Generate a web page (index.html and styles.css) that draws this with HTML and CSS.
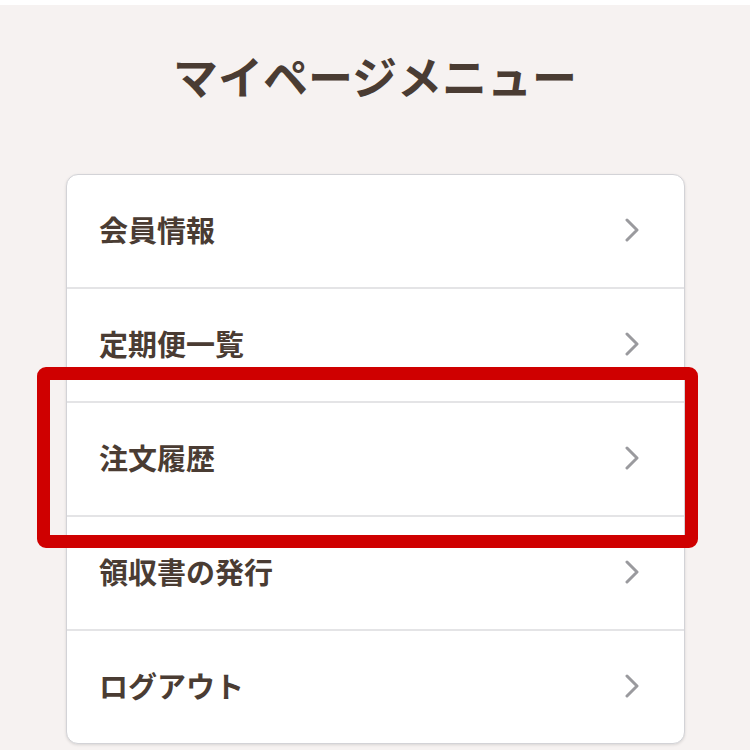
FILE: index.html
```html
<!DOCTYPE html>
<html lang="ja">
<head>
<meta charset="utf-8">
<title>マイページメニュー</title>
<link rel="stylesheet" href="styles.css">
</head>
<body>
<div class="topbar"></div>
<main class="page">
  <h1 class="title">マイページメニュー</h1>
  <div class="card">
    <a class="row" href="#"><span class="label">会員情報</span><svg class="chev" viewBox="0 0 14 24"><path d="M2 2 L12 12 L2 22" /></svg></a>
    <a class="row" href="#"><span class="label">定期便一覧</span><svg class="chev" viewBox="0 0 14 24"><path d="M2 2 L12 12 L2 22" /></svg></a>
    <a class="row" href="#"><span class="label">注文履歴</span><svg class="chev" viewBox="0 0 14 24"><path d="M2 2 L12 12 L2 22" /></svg></a>
    <a class="row" href="#"><span class="label">領収書の発行</span><svg class="chev" viewBox="0 0 14 24"><path d="M2 2 L12 12 L2 22" /></svg></a>
    <a class="row last" href="#"><span class="label">ログアウト</span><svg class="chev" viewBox="0 0 14 24"><path d="M2 2 L12 12 L2 22" /></svg></a>
    <div class="highlight"></div>
  </div>
</main>
</body>
</html>
```
FILE: styles.css
```css
html, body {
  margin: 0;
  padding: 0;
}
body {
  background: #f6f2f1;
  font-family: "Noto Sans CJK JP", "Noto Sans", sans-serif;
  color: #4a3c33;
  height: 750px;
  overflow: hidden;
}
.topbar {
  height: 5px;
  background: #ffffff;
}
.page {
  display: flex;
  flex-direction: column;
  align-items: center;
}
.title {
  margin: 0;
  padding-top: 43px;
  height: 125px;
  box-sizing: border-box;
  font-size: 45px;
  font-weight: 700;
  line-height: 56px;
  letter-spacing: 0;
  color: #4a3c33;
}
.card {
  position: relative;
  margin-top: 44px;
  margin-left: 1px;
  width: 619px;
  box-sizing: border-box;
  background: #ffffff;
  border: 1px solid #d3d3d7;
  border-radius: 12px;
  box-shadow: 0 1px 3px rgba(0, 0, 0, 0.12);
}
.row {
  display: flex;
  align-items: center;
  justify-content: space-between;
  height: 114px;
  box-sizing: border-box;
  padding: 0 45px 0 32px;
  border-bottom: 2px solid #e4e4e6;
  text-decoration: none;
  color: #4a3c33;
}
.row.last {
  border-bottom: none;
  height: 112px;
}
.label {
  font-size: 29px;
  font-weight: 700;
  line-height: 1;
  margin-top: -4px;
}
.chev {
  width: 14px;
  height: 24px;
  margin-top: -2px;
  fill: none;
  stroke: #9a9a9e;
  stroke-width: 3;
  stroke-linecap: round;
  stroke-linejoin: round;
}
.highlight {
  position: absolute;
  left: -30px;
  top: 192px;
  width: 661px;
  height: 181px;
  box-sizing: border-box;
  border: 13px solid #cf0000;
  border-radius: 9px;
  pointer-events: none;
}
```
